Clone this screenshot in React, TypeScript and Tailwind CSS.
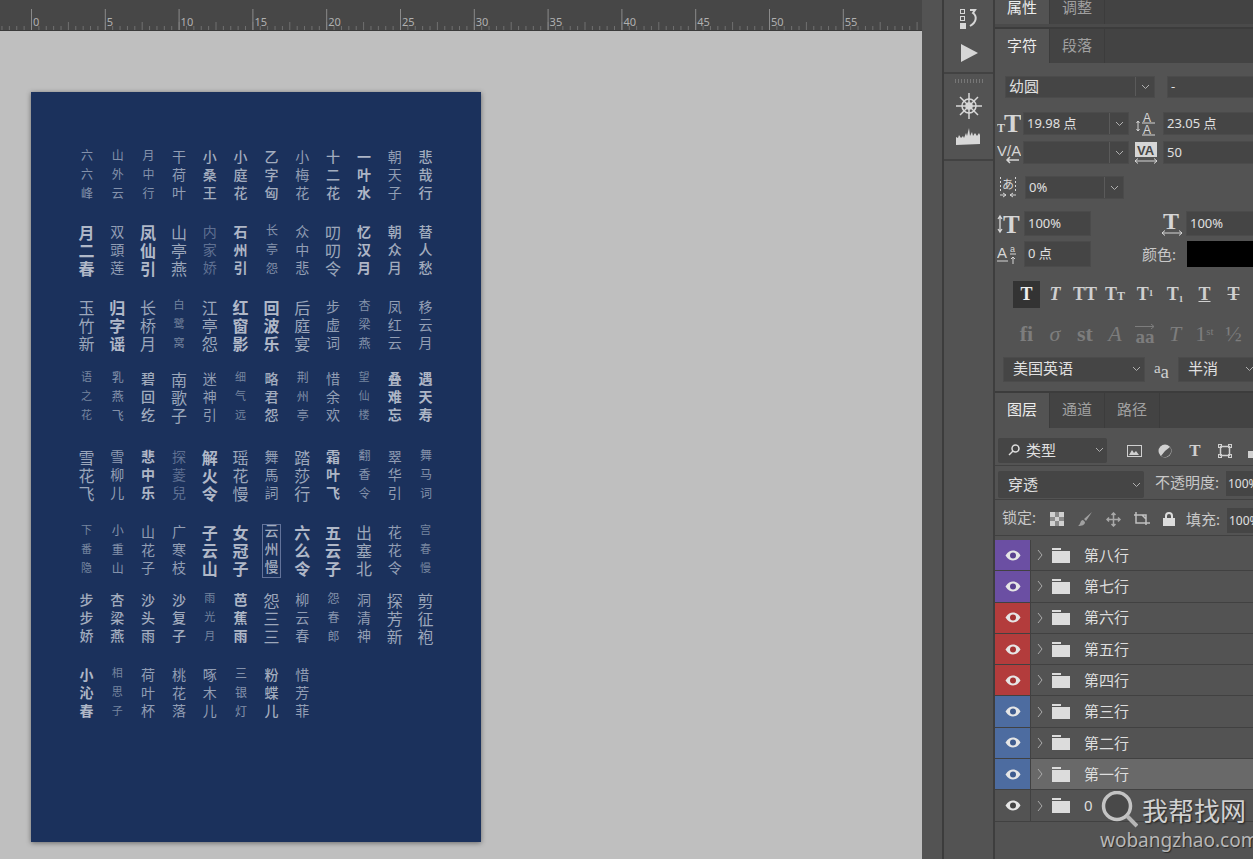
import React from "react";

const V: Record<string, string> = {
  s: "text-[11px] leading-[14px] tracking-[8px] font-normal text-[#76859f]",
  t: "text-[12px] leading-[14px] tracking-[7px] font-normal text-[#8492ab]",
  d: "text-[14px] leading-[16px] tracking-[4px] font-normal text-[#5f7092]",
  n: "text-[14px] leading-[16px] tracking-[4px] font-normal text-[#929eb4]",
  m: "text-[14px] leading-[16px] tracking-[4px] font-medium text-[#a2acbe]",
  b: "text-[14px] leading-[16px] tracking-[4px] font-bold text-[#aeb6c6]",
  l: "text-[16px] leading-[18px] tracking-[2px] font-normal text-[#9ca7bb]",
  L: "text-[16px] leading-[18px] tracking-[2px] font-bold text-[#b0b8c8]",
};

const ROWS: { h: string; items: [string, string][] }[] = [
  { h: "h-[75px]", items: [["六六峰","t"],["山外云","t"],["月中行","t"],["干荷叶","n"],["小桑王","m"],["小庭花","m"],["乙字匈","m"],["小梅花","n"],["十二花","m"],["一叶水","b"],["朝天子","n"],["悲哉行","m"]] },
  { h: "h-[75px]", items: [["月二春","L"],["双頭莲","n"],["凤仙引","L"],["山亭燕","l"],["内家娇","d"],["石州引","b"],["长亭怨","t"],["众中悲","n"],["叨叨令","l"],["忆汉月","b"],["朝众月","m"],["替人愁","m"]] },
  { h: "h-[72px]", items: [["玉竹新","l"],["归字谣","L"],["长桥月","l"],["白鹭窝","s"],["江亭怨","l"],["红窗影","L"],["回波乐","L"],["后庭宴","l"],["步虚词","n"],["杏梁燕","t"],["凤红云","n"],["移云月","n"]] },
  { h: "h-[78px]", items: [["语之花","s"],["乳燕飞","t"],["碧回纥","m"],["南歌子","l"],["迷神引","n"],["细气远","s"],["略君怨","m"],["荆州亭","t"],["惜余欢","n"],["望仙楼","s"],["叠难忘","b"],["遇天寿","b"]] },
  { h: "h-[75px]", items: [["雪花飞","l"],["雪柳儿","n"],["悲中乐","b"],["探菱兒","d"],["解火令","L"],["瑶花慢","l"],["舞馬詞","n"],["踏莎行","l"],["霜叶飞","b"],["翻香令","t"],["翠华引","n"],["舞马词","t"]] },
  { h: "h-[68px]", items: [["下番隐","s"],["小重山","t"],["山花子","n"],["广寒枝","n"],["子云山","L"],["女冠子","L"],["云州慢","m"],["六么令","L"],["五云子","L"],["出塞北","l"],["花花令","n"],["宫春慢","s"]] },
  { h: "h-[75px]", items: [["步步娇","m"],["杏梁燕","m"],["沙头雨","m"],["沙复子","m"],["雨光月","s"],["芭蕉雨","b"],["怨三三","l"],["柳云春","n"],["怨春郎","t"],["洞清神","n"],["探芳新","l"],["剪征袍","l"]] },
  { h: "h-[60px]", items: [["小沁春","b"],["相思子","s"],["荷叶杯","n"],["桃花落","n"],["啄木儿","n"],["三银灯","t"],["粉蝶儿","m"],["惜芳菲","n"]] },
];

function Ruler() {
  const xs = Array.from({ length: 12 }, (_, i) => i);
  const minor = Array.from({ length: 130 }, (_, i) => i);
  return (
    <svg width="922" height="31" className="block shrink-0 bg-[#474747]">
      {minor.map((i) => (
        <line key={i} x1={31 + (i - 4) * 7.38 + 0.5} x2={31 + (i - 4) * 7.38 + 0.5} y1={i % 5 === 4 ? 22 : 26} y2="30" stroke="#707070" />
      ))}
      {xs.map((i) => (
        <g key={i}>
          <line x1={31.5 + i * 73.8} x2={31.5 + i * 73.8} y1="9" y2="30" stroke="#8a8a8a" />
          <text x={33 + i * 73.8} y="26" fontSize="11" fill="#b0b0b0" fontFamily="Noto Sans, sans-serif">{i * 5}</text>
        </g>
      ))}
      <line x1="0" x2="922" y1="30.5" y2="30.5" stroke="#3a3a3a" />
    </svg>
  );
}

function Poster() {
  return (
    <div className="ml-[31px] mt-[61px] h-[750px] w-[450px] bg-[#1b315c] pl-[40px] pt-[58px] shadow-[0_1px_5px_rgba(0,0,0,0.45)] font-['Noto_Sans_CJK_SC',sans-serif]">
      {ROWS.map((r, i) => (
        <div key={i} className={`grid w-[370px] grid-cols-12 ${r.h}`}>
          {r.items.map(([t, v], j) => (
            <div key={j} className="flex justify-center">
              <div className={`flex items-center justify-center ${t === "云州慢" ? "h-[52px] w-[17px] outline outline-1 outline-[#63739a]" : "h-[54px]"}`}>
                <span className={`whitespace-nowrap [writing-mode:vertical-rl] ${V[v]}`}>{t}</span>
              </div>
            </div>
          ))}
        </div>
      ))}
    </div>
  );
}

function Strip() {
  return (
    <div className="flex h-full w-[71px] shrink-0">
      <div className="w-[20px] bg-[#535353]" />
      <div className="w-[2px] bg-[#3c3c3c]" />
      <div className="flex w-[49px] flex-col bg-[#535353]">
        <div className="flex h-[74px] flex-col items-center gap-[14px] border-b-2 border-[#424242] pt-[8px]">
          <svg width="20" height="22" viewBox="0 0 20 22" fill="none">
            <rect x="1.5" y="1.5" width="4" height="4" stroke="#d6d6d6" />
            <rect x="1.5" y="8.5" width="4" height="4" stroke="#d6d6d6" />
            <rect x="1" y="15" width="6" height="6" fill="#d6d6d6" />
            <path d="M11 2h5l-2 3c4 3 4 9-3 13" stroke="#d6d6d6" strokeWidth="2" />
          </svg>
          <svg width="18" height="18" viewBox="0 0 18 18"><path d="M1 0l17 9-17 9z" fill="#d6d6d6" /></svg>
        </div>
        <div className="flex h-[87px] flex-col items-center border-b-2 border-[#424242] pt-[5px]">
          <div className="h-[4px] w-[28px] bg-[repeating-linear-gradient(90deg,#777_0,#777_1px,transparent_1px,transparent_3px)]" />
          <svg width="26" height="26" viewBox="0 0 26 26" fill="none" stroke="#d8d8d8" strokeWidth="1.5" className="mt-[10px]">
            <circle cx="13" cy="13" r="7" />
            <circle cx="13" cy="13" r="3" />
            <path d="M13 0v26M0 13h26M4 4l18 18M22 4L4 22" />
          </svg>
          <svg width="25" height="17" viewBox="0 0 25 17" className="mt-[9px]"><path d="M0 17V9l2 1 1-3 2 3 2-2 1 2 2-5 1 3 2-8 1 8 2-4 1 4 2-3 2 3 2-3 1 2v9z" fill="#d8d8d8" /></svg>
        </div>
      </div>
    </div>
  );
}

function Tab({ children, active }: { children: React.ReactNode; active?: boolean }) {
  return (
    <div className={`flex h-full w-[55px] items-center justify-center border-r border-[#3c3c3c] pb-[2px] text-[15px] ${active ? "bg-[#535353] text-[#ececec]" : "text-[#a0a0a0]"}`}>
      {children}
    </div>
  );
}

const Chev = () => (
  <svg width="9" height="6" viewBox="0 0 9 6" fill="none" stroke="#b0b0b0"><path d="M1 1l3.5 3.5L8 1" /></svg>
);

function Field({ text, w, chev, t }: { text: string; w: string; chev?: boolean; t?: string }) {
  return (
    <div className={`flex h-full shrink-0 items-center border border-[#4b4b4b] bg-[#454545] text-[#e0e0e0] ${t ?? "text-[13px]"} ${w}`}>
      <span className="flex-1 whitespace-nowrap pl-[3px]">{text}</span>
      {chev && (
        <span className="flex h-full w-[19px] items-center justify-center border-l border-[#5a5a5a]"><Chev /></span>
      )}
    </div>
  );
}

const Serif = ({ children, c }: { children: React.ReactNode; c: string }) => (
  <span className={`font-['Liberation_Serif',serif] ${c}`}>{children}</span>
);

const SERIF = "Liberation Serif, serif";
const SANS = "Liberation Sans, sans-serif";
const INK = "#d6d6d6";

const SizeIcon = () => (
  <svg width="24" height="24" viewBox="0 0 24 24" fill={INK} fontFamily={SERIF} fontWeight="700">
    <text x="0" y="20" fontSize="12">T</text>
    <text x="7" y="20" fontSize="26">T</text>
  </svg>
);

const LeadingIcon = () => (
  <svg width="22" height="24" viewBox="0 0 22 24" fill="none" stroke={INK}>
    <text x="8" y="10" fontSize="12" fill={INK} stroke="none" fontFamily={SANS}>A</text>
    <text x="8" y="22" fontSize="12" fill={INK} stroke="none" fontFamily={SANS}>A</text>
    <path d="M7 11h13M7 23h13M3 9v10M1.500 11L3 9l1.500 2M1.500 17L3 19l1.500-2" />
  </svg>
);

const KernIcon = () => (
  <svg width="24" height="23" viewBox="0 0 24 23" fill="none" stroke={INK}>
    <text x="0" y="15" fontSize="15" fill={INK} stroke="none" fontFamily={SANS}>V/A</text>
    <path d="M10 19h12M13 16l-3 3 3 3" strokeWidth="1.500" />
  </svg>
);

const TrackIcon = () => (
  <svg width="24" height="23" viewBox="0 0 24 23" fill="none" stroke={INK}>
    <rect x="1" y="1" width="22" height="15" fill={INK} stroke="none" />
    <text x="3" y="14" fontSize="13" fontWeight="700" fill="#454545" stroke="none" fontFamily={SANS}>VA</text>
    <path d="M1 20h22M4 17.500L1 20l3 2.500M20 17.500l3 2.500-3 2.500" />
  </svg>
);

const TsumeIcon = () => (
  <svg width="20" height="23" viewBox="0 0 20 23" fill="none" stroke={INK}>
    <text x="3" y="13" fontSize="12" fill={INK} stroke="none" fontFamily="Noto Sans CJK JP, sans-serif">あ</text>
    <path d="M1.500 1v14M16.500 1v14" strokeDasharray="2 2" />
    <path d="M1 19h6M4 17l3 2-3 2M17 19h-6M14 17l-3 2 3 2" />
  </svg>
);

const VScaleIcon = () => (
  <svg width="24" height="24" viewBox="0 0 24 24" fill="none" stroke={INK}>
    <text x="6" y="21" fontSize="25" fontWeight="700" fill={INK} stroke="none" fontFamily={SERIF}>T</text>
    <path d="M3 4v16M1 7l2-3 2 3M1 17l2 3 2-3" strokeWidth="1.300" />
  </svg>
);

const HScaleIcon = () => (
  <svg width="22" height="24" viewBox="0 0 22 24" fill="none" stroke={INK}>
    <text x="2" y="17" fontSize="24" fontWeight="700" fill={INK} stroke="none" fontFamily={SERIF}>T</text>
    <path d="M1 21h20M4 18.500L1 21l3 2.500M18 18.500l3 2.500-3 2.500" />
  </svg>
);

const BaseIcon = () => (
  <svg width="22" height="22" viewBox="0 0 22 22" fill="none" stroke={INK}>
    <text x="0" y="15" fontSize="15" fill={INK} stroke="none" fontFamily={SANS}>A</text>
    <text x="13" y="9" fontSize="9" fill={INK} stroke="none" fontFamily={SANS}>a</text>
    <path d="M0 18h11M13 11h6M16 21v-7M14 16l2-2 2 2" />
  </svg>
);

const Eye = ({ c, p }: { c: string; p: string }) => (
  <svg width="16" height="11" viewBox="0 0 16 11">
    <path d="M0.5 5.5C3 1.5 5.5 0.5 8 0.5s5 1 7.5 5c-2.500 4-5 5-7.500 5s-5-1-7.500-5z" fill={c} />
    <circle cx="8" cy="5.500" r="3" fill={p} />
  </svg>
);

const Folder = () => (
  <svg width="18" height="15" viewBox="0 0 18 15"><path d="M0 0h9v2H0zM0 3h18v12H0z" fill="#dcdcdc" /></svg>
);

const LAYERS: [string, string, string][] = [
  ["第八行", "bg-[#6b4fa3]", "#5a4190"],
  ["第七行", "bg-[#6b4fa3]", "#5a4190"],
  ["第六行", "bg-[#b33c3c]", "#a53333"],
  ["第五行", "bg-[#b33c3c]", "#a53333"],
  ["第四行", "bg-[#b33c3c]", "#a53333"],
  ["第三行", "bg-[#4d6ca0]", "#3f5c8f"],
  ["第二行", "bg-[#4d6ca0]", "#3f5c8f"],
  ["第一行", "bg-[#4d6ca0]", "#3f5c8f"],
  ["0", "bg-[#535353]", "#444444"],
];

function Panel() {
  return (
    <div className="flex h-full w-[260px] shrink-0 flex-col overflow-hidden border-l-2 border-[#3e3e3e] bg-[#535353] font-['Noto_Sans','Noto_Sans_CJK_SC',sans-serif]">
      <div className="h-[24px] shrink-0 overflow-hidden bg-[#434343]">
        <div className="flex h-[34px] -translate-y-[9px]">
          <Tab active>属性</Tab>
          <Tab>调整</Tab>
        </div>
      </div>
      <div className="h-[5px] shrink-0 border-b-2 border-[#3c3c3c] bg-[#4a4a4a]" />
      <div className="flex h-[34px] shrink-0 bg-[#434343]">
        <Tab active>字符</Tab>
        <Tab>段落</Tab>
      </div>

      <div className="flex h-[328px] w-[320px] shrink-0 flex-col pt-[13px] text-[#d0d0d0]">
        <div className="flex h-[22px] gap-[12px] pl-[10px]">
          <Field text="幼圆" w="w-[150px] pb-[1px]" chev t="text-[15px]" />
          <Field text="-" w="w-[110px]" chev />
        </div>
        <div className="mt-[14px] flex h-[23px] items-center pl-[2px]">
          <span className="flex w-[26px]"><SizeIcon /></span>
          <Field text="19.98 点" w="w-[106px]" chev />
          <span className="flex w-[34px] justify-center"><LeadingIcon /></span>
          <Field text="23.05 点" w="w-[120px]" chev />
        </div>
        <div className="mt-[6px] flex h-[23px] items-center pl-[2px]">
          <span className="flex w-[26px]"><KernIcon /></span>
          <Field text="" w="w-[106px]" chev />
          <span className="flex w-[34px] justify-center"><TrackIcon /></span>
          <Field text="50" w="w-[120px]" chev />
        </div>
        <div className="mt-[12px] flex h-[23px] items-center pl-[4px]">
          <span className="flex w-[26px]"><TsumeIcon /></span>
          <Field text="0%" w="w-[99px]" chev />
        </div>
        <div className="mt-[12px] flex h-[25px] items-center pl-[2px]">
          <span className="flex w-[27px]"><VScaleIcon /></span>
          <Field text="100%" w="w-[67px]" />
          <span className="flex w-[95px] justify-end pr-[3px]"><HScaleIcon /></span>
          <Field text="100%" w="w-[120px]" />
        </div>
        <div className="mt-[5px] flex h-[26px] items-center pl-[2px]">
          <span className="flex w-[27px]"><BaseIcon /></span>
          <Field text="0 点" w="w-[67px]" />
          <span className="ml-[51px] w-[45px] text-[15px] text-[#c8c8c8]">颜色:</span>
          <div className="h-full w-[120px] bg-black" />
        </div>
        <div className="mt-[14px] flex h-[27px] items-center pl-[18px] font-['Liberation_Serif',serif] text-[18px] font-bold text-[#d0d0d0]">
          <span className="flex h-[27px] w-[27px] items-center justify-center bg-[#333333] text-[#eeeeee]">T</span>
          <span className="w-[30px] text-center italic">T</span>
          <span className="w-[30px] text-center">TT</span>
          <span className="w-[30px] text-center">T<span className="text-[12px]">T</span></span>
          <span className="w-[30px] text-center">T<sup className="text-[9px]">1</sup></span>
          <span className="w-[30px] text-center">T<sub className="text-[9px]">1</sub></span>
          <span className="w-[29px] text-center underline">T</span>
          <span className="w-[29px] text-center line-through">T</span>
        </div>
        <div className="mt-[12px] flex h-[27px] items-center pl-[18px] font-['Liberation_Serif',serif] text-[22px] leading-none text-[#7d7d7d]">
          <span className="w-[27px] text-center font-bold">fi</span>
          <span className="w-[30px] text-center italic">σ</span>
          <span className="w-[30px] text-center font-bold">st</span>
          <span className="w-[30px] text-center italic">A</span>
          <span className="flex w-[30px] flex-col items-center font-bold">
            <svg width="20" height="5" viewBox="0 0 20 5" fill="none" stroke="#7d7d7d"><path d="M0 2.500h19M16 0l3 2.500L16 5" /></svg>
            <span className="text-[19px] leading-[15px]">aa</span>
          </span>
          <span className="w-[30px] text-center italic">T</span>
          <span className="w-[29px] text-center">1<sup className="text-[11px]">st</sup></span>
          <span className="w-[29px] text-center">½</span>
        </div>
        <div className="mt-[10px] flex h-[25px] items-center pl-[8px]">
          <div className="flex h-full w-[142px] items-center justify-between border border-[#4b4b4b] bg-[#454545] pb-[2px] pl-[9px] pr-[3px] text-[15px] text-[#e0e0e0]">美国英语<Chev /></div>
          <Serif c="flex w-[33px] justify-center text-[#d0d0d0]"><span className="text-[15px] leading-[18px]">a</span><span className="pt-[4px] text-[19px] leading-[18px]">a</span></Serif>
          <div className="flex h-full w-[80px] items-center justify-between border border-[#4b4b4b] bg-[#454545] pb-[2px] pl-[9px] pr-[3px] text-[15px] text-[#e0e0e0]">半消<Chev /></div>
        </div>
      </div>

      <div className="h-[2px] shrink-0 bg-[#3c3c3c]" />
      <div className="flex h-[35px] shrink-0 bg-[#434343]">
        <Tab active>图层</Tab>
        <Tab>通道</Tab>
        <Tab>路径</Tab>
      </div>

      <div className="flex h-[38px] w-[300px] shrink-0 items-start border-b border-[#414141] pl-[3px] pt-[10px]">
        <div className="flex h-[25px] w-[109px] items-center justify-between rounded-[2px] bg-[#454545] pb-[1px] pl-[10px] pr-[3px] text-[15px] text-[#e0e0e0]">
          <span className="flex items-center gap-[6px]">
            <svg width="12" height="12" viewBox="0 0 12 12" fill="none" stroke="#dedede" strokeWidth="1.500"><circle cx="7.500" cy="4.500" r="3.500" /><path d="M5 7l-4 4" /></svg>
            类型
          </span>
          <Chev />
        </div>
        <div className="ml-[20px] mt-[4px] flex items-center gap-[16px]">
          <svg width="15" height="12" viewBox="0 0 15 12"><rect x="0.500" y="0.500" width="14" height="11" fill="none" stroke="#d0d0d0" /><path d="M2 10l3-5 2 3 2-2 3 4z" fill="#d0d0d0" /></svg>
          <svg width="14" height="14" viewBox="0 0 14 14"><circle cx="7" cy="7" r="6.500" fill="#d0d0d0" /><path d="M7 7l5-4A6.500 6.500 0 0 1 3 12z" fill="#535353" /></svg>
          <Serif c="w-[14px] text-center text-[17px] leading-none font-bold text-[#d0d0d0]">T</Serif>
          <svg width="14" height="14" viewBox="0 0 14 14" fill="none" stroke="#d0d0d0"><rect x="2.500" y="2.500" width="9" height="9" strokeWidth="1.500" /><rect x="0.500" y="0.500" width="3" height="3" /><rect x="10.500" y="0.500" width="3" height="3" /><rect x="0.500" y="10.500" width="3" height="3" /><rect x="10.500" y="10.500" width="3" height="3" /></svg>
          <svg width="14" height="14" viewBox="0 0 14 14"><path d="M0 7h6V1h8v13H0z" fill="#d0d0d0" /></svg>
        </div>
      </div>

      <div className="flex h-[34px] w-[300px] shrink-0 items-start border-b border-[#414141] pl-[3px] pt-[5px]">
        <div className="flex h-[27px] w-[146px] items-center justify-between rounded-[2px] bg-[#454545] pl-[10px] pr-[3px] text-[15px] text-[#e0e0e0]">穿透<Chev /></div>
        <span className="ml-[11px] w-[71px] text-[15px] leading-[22px] text-[#c8c8c8]">不透明度:</span>
        <div className="h-[25px] w-[50px] bg-[#454545] pl-[2px] text-[12px] leading-[25px] text-[#e0e0e0]">100%</div>
      </div>

      <div className="flex h-[36px] w-[300px] shrink-0 items-start border-b border-[#414141] pl-[7px] pt-[7px]">
        <span className="w-[48px] text-[15px] leading-[20px] text-[#c8c8c8]">锁定:</span>
        <div className="mt-[4px] flex items-center gap-[13px]">
          <svg width="14" height="14" viewBox="0 0 14 14"><rect width="14" height="14" fill="#8a8a8a" /><path d="M0 0h5v5H0zM9 0h5v5H9zM5 5h4v4H5zM0 9h5v5H0zM9 9h5v5H9z" fill="#d0d0d0" /></svg>
          <svg width="16" height="16" viewBox="0 0 16 16"><path d="M15 1L7 8l2 2zM6 9c-3 0-2 4-5 6 4 0 7-1 7-4z" fill="#a0a0a0" /></svg>
          <svg width="15" height="15" viewBox="0 0 15 15" fill="none" stroke="#a8a8a8" strokeWidth="1.500"><path d="M7.500 1v13M1 7.500h13M5.500 3l2-2 2 2M5.500 12l2 2 2-2M3 5.500l-2 2 2 2M12 5.500l2 2-2 2" /></svg>
          <svg width="16" height="14" viewBox="0 0 16 14" fill="none" stroke="#c0c0c0" strokeWidth="1.500"><path d="M0 3h12v10M2 0v11h14M8 3l4 4" /></svg>
          <svg width="12" height="14" viewBox="0 0 12 14"><path d="M2 6V4a4 4 0 0 1 8 0v2h2v8H0V6zm2 0h4V4a2 2 0 0 0-4 0z" fill="#dcdcdc" fillRule="evenodd" /></svg>
        </div>
        <span className="ml-[11px] mt-[2px] w-[41px] text-[15px] leading-[20px] text-[#c8c8c8]">填充:</span>
        <div className="mt-[1px] h-[25px] w-[50px] bg-[#454545] pl-[2px] text-[12px] leading-[25px] text-[#e0e0e0]">100%</div>
      </div>

      <div className="h-[4px] shrink-0" />

      {LAYERS.map(([name, color, pupil], i) => (
        <div key={name} className={`flex h-[31.300px] shrink-0 items-center border-b border-[#414141] ${i === 7 ? "bg-[#696969]" : ""}`}>
          <div className={`flex h-full w-[36px] items-center justify-center border-r border-[#414141] ${color}`}>
            <Eye c="#e6e6e6" p={pupil} />
          </div>
          <svg width="6" height="12" viewBox="0 0 6 12" fill="none" stroke="#aaaaaa" className="ml-[6px]"><path d="M1 1l4 5-4 5" /></svg>
          <span className="ml-[9px]"><Folder /></span>
          <span className="ml-[14px] text-[15px] text-[#dedede]">{name}</span>
        </div>
      ))}
    </div>
  );
}

export default function App() {
  return (
    <div className="relative flex h-[859px] w-[1253px] overflow-hidden bg-[#535353]">
      <div className="flex h-full w-[922px] shrink-0 flex-col bg-[#bfbfbf]">
        <Ruler />
        <Poster />
      </div>
      <Strip />
      <Panel />
      <div className="absolute left-[1100px] top-[790px] flex h-[60px] w-[150px] flex-col font-['Noto_Sans_CJK_SC',sans-serif]">
        <div className="flex h-[40px] items-center">
          <svg width="38" height="38" viewBox="0 0 38 38" fill="none">
            <circle cx="17" cy="15" r="13.500" stroke="#c4c4c4" strokeWidth="3.500" fill="#3f3f3f" fillOpacity="0.500" />
            <path d="M27 25l10 10" stroke="#b5b5b5" strokeWidth="4" />
          </svg>
          <span className="ml-[4px] text-[26px] leading-none text-[#d0d0d0] [text-shadow:1px_1px_2px_rgba(0,0,0,0.6)]">我帮找网</span>
        </div>
        <span className="font-['Noto_Sans',sans-serif] text-[19px] leading-[20px] text-[#b8b8b8] [text-shadow:1px_1px_1px_rgba(0,0,0,0.5)]">wobangzhao.com</span>
      </div>
    </div>
  );
}
